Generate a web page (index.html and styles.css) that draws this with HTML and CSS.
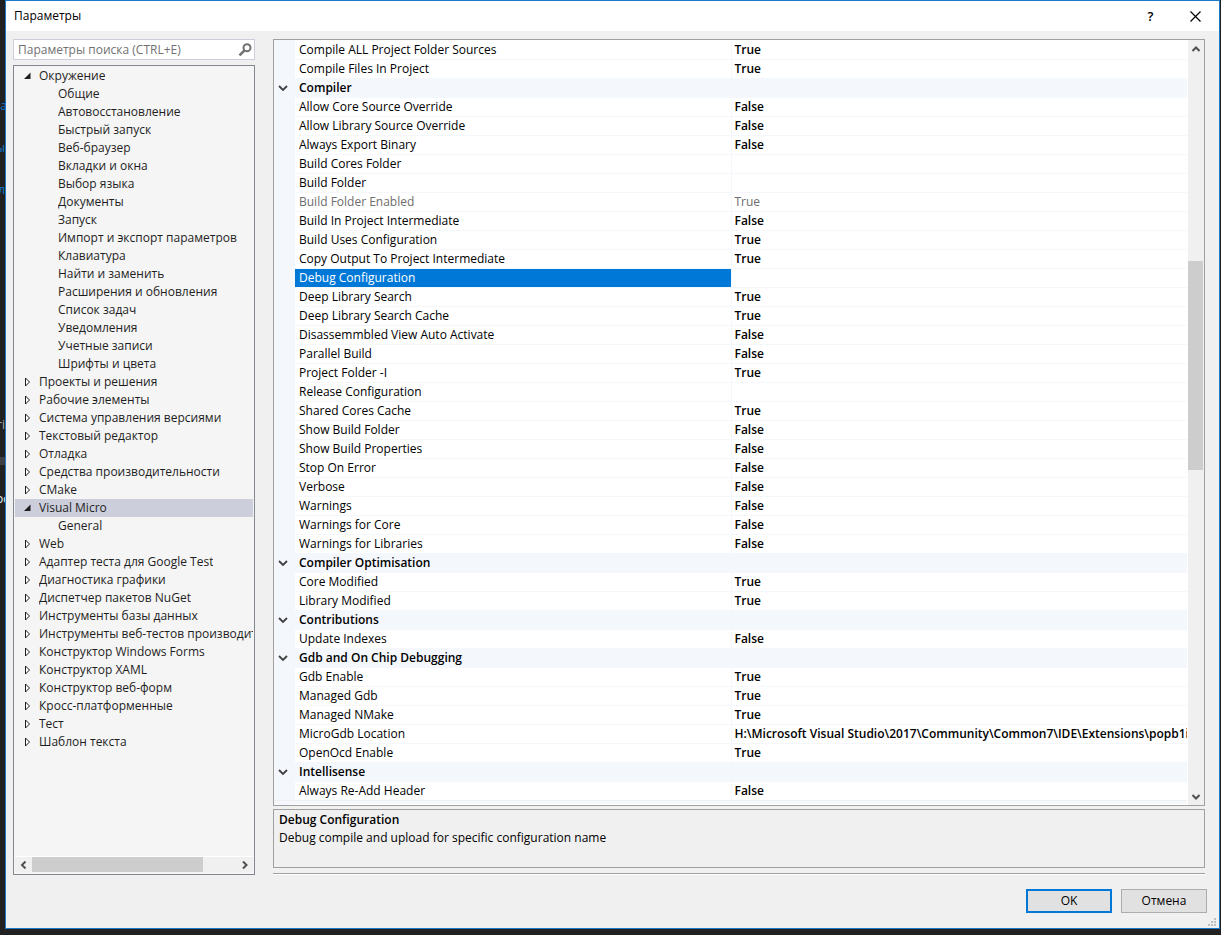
FILE: index.html
```html
<!DOCTYPE html>
<html lang="ru">
<head>
<meta charset="utf-8">
<title>Параметры</title>
<link rel="stylesheet" href="styles.css">
</head>
<body>
<div class="backdrop" aria-hidden="true">
  <span class="scrap scrap-a">на</span>
  <span class="scrap scrap-b">ы</span>
  <span class="scrap scrap-c">л</span>
  <span class="scrap scrap-d">ri</span>
  <span class="scrap-band"></span>
  <span class="scrap scrap-e">ос</span>
</div>
<main class="window">
  <header class="titlebar">
    <h1 class="title">Параметры</h1>
    <button class="caption-btn help" aria-label="Справка">?</button>
    <button class="caption-btn" aria-label="Закрыть"><svg width="11" height="11" viewBox="0 0 11 11"><path d="M.5.5l10 10M10.5.5l-10 10" stroke="#000" stroke-width="1.2" fill="none"/></svg></button>
  </header>
  <div class="content">
    <aside class="sidebar">
      <label class="search">
        <input type="text" placeholder="Параметры поиска (CTRL+E)" aria-label="Параметры поиска">
        <svg width="14" height="14" viewBox="0 0 14 14"><circle cx="9" cy="4.800" r="3.500" fill="none" stroke="#717171" stroke-width="2"/><path d="M6.500 7.300L1.500 12.300" stroke="#717171" stroke-width="2.600"/></svg>
      </label>
      <nav class="tree">
        <ul class="tree-list" id="tree"></ul>
        <div class="hscroll">
          <button class="arrow" aria-label="Влево"><svg width="8" height="8" viewBox="0 0 8 8"><path d="M5.500 .5L2 4l3.500 3.500" fill="none" stroke="#505050" stroke-width="2"/></svg></button>
          <div class="htrack"><div class="hthumb"></div></div>
          <button class="arrow" aria-label="Вправо"><svg width="8" height="8" viewBox="0 0 8 8"><path d="M2 .5L5.500 4 2 7.500" fill="none" stroke="#505050" stroke-width="2"/></svg></button>
        </div>
      </nav>
    </aside>
    <section class="panel">
      <div class="grid-box">
        <div class="grid-view">
          <table class="props">
            <colgroup><col class="c-gutter"><col class="c-name"><col class="c-value"></colgroup>
            <tbody id="props"></tbody>
          </table>
        </div>
        <div class="vscroll">
          <button class="arrow" aria-label="Вверх"><svg width="8" height="8" viewBox="0 0 8 8"><path d="M.5 6L4 2.500 7.500 6" fill="none" stroke="#505050" stroke-width="2"/></svg></button>
          <div class="vtrack"><div class="vthumb"></div></div>
          <button class="arrow" aria-label="Вниз"><svg width="8" height="8" viewBox="0 0 8 8"><path d="M.5 2L4 5.500 7.500 2" fill="none" stroke="#505050" stroke-width="2"/></svg></button>
        </div>
      </div>
      <div class="hint">
        <h2>Debug Configuration</h2>
        <p>Debug compile and upload for specific configuration name</p>
      </div>
      <hr class="rule">
    </section>
  </div>
  <footer class="footer">
    <button class="btn primary">OK</button>
    <button class="btn">Отмена</button>
  </footer>
  <svg class="grip" width="8" height="8" viewBox="0 0 8 8"><path d="M6 0h2v2H6zM3 3h2v2H3zM6 3h2v2H6zM0 6h2v2H0zM3 6h2v2H3zM6 6h2v2H6z" fill="#bfbfbf"/></svg>
</main>
<script src="app.js"></script>
</body>
</html>
```
FILE: styles.css
```css
* { box-sizing: border-box; }
body {
  margin: 0;
  min-height: 100vh;
  display: flex;
  padding: 0 1px 6px 5px;
  background: #212121;
  font: 12px/18px "Open Sans", "Noto Sans", sans-serif;
  color: #000;
}
button, input { font: inherit; color: inherit; }
h1, h2, p, ul { margin: 0; padding: 0; font-size: inherit; }
svg { display: block; flex: none; }

.backdrop { position: absolute; inset: 0 auto 0 0; width: 5px; overflow: hidden; }
.scrap { position: absolute; right: 0; color: #0e7ad3; }
.scrap-a { top: 97px; right: -2px; }
.scrap-b { top: 139px; }
.scrap-c { top: 181px; }
.scrap-d { top: 416px; color: #b0b0b0; }
.scrap-e { top: 490px; right: -4px; color: #f0f0f0; }
.scrap-band { position: absolute; top: 457px; width: 5px; height: 8px; background: #3f3f46; }

.window {
  position: relative;
  flex: 1;
  min-width: 0;
  display: flex;
  flex-direction: column;
  border: 1px solid #1979ca;
  background: #f0f0f0;
}
.titlebar { display: flex; align-items: center; height: 30px; padding: 0 1px 0 8px; background: #fff; }
.title { flex: 1; font-weight: 400; }
.caption-btn {
  width: 45px; height: 30px; padding: 0; border: 0; background: none;
  display: flex; align-items: center; justify-content: center;
}
.help { font-size: 13px; font-weight: 600; }

.content { flex: 1; display: grid; grid-template-columns: 242px minmax(0, 1fr); gap: 18px; padding: 8px 14px 0 7px; }
.sidebar { display: flex; flex-direction: column; gap: 5px; min-width: 0; }
.search {
  display: flex; align-items: center; height: 21px; padding: 0 2px 0 4px;
  border: 1px solid #cccedb; background: #fff;
}
.search input { flex: 1; min-width: 0; height: 19px; padding: 0; border: 0; outline: 0; background: none; }
.search input::placeholder { color: #717171; opacity: 1; }

.tree { flex: 1; display: flex; flex-direction: column; padding: 1px; border: 1px solid #828790; background: #f5f5f5; color: #1e1e1e; }
.tree-list { flex: 1; list-style: none; overflow: hidden; }
.tree-item { display: flex; align-items: center; gap: 8px; height: 18px; padding-left: 8px; white-space: nowrap; }
.tree-item span { min-width: 0; overflow: hidden; }
.tree-item.child { padding-left: 43px; }
.tree-item.selected { background: #cccedb; }
.hscroll { display: flex; height: 16px; margin-bottom: 1px; border-top: 1px solid #fff; background: #f0f0f0; }
.arrow { display: flex; align-items: center; justify-content: center; width: 17px; height: 17px; padding: 0; border: 0; background: none; }
.hscroll .arrow { height: 15px; }
.htrack { flex: 1; }
.hthumb { width: 84%; height: 15px; background: #cdcdcd; }

.panel { display: flex; flex-direction: column; min-width: 0; }
.grid-box { flex: 1; display: flex; border: 1px solid #a0a0a0; background: #fff; }
.grid-view { flex: 1; min-width: 0; padding-top: 1px; margin-right: 1px; background: linear-gradient(90deg, #f4f7fc 21px, #fff 21px); }
.props { width: 100%; table-layout: fixed; border-collapse: separate; border-spacing: 0; }
.c-gutter { width: 21px; }
.c-value { width: 50%; }
.props th, .props td {
  height: 19px; padding: 0 0 0 4px; text-align: left; font-weight: 400; line-height: 18px;
  white-space: nowrap; overflow: hidden; border-bottom: 1px solid #f4f7fc;
}
.props .gutter { padding: 0 0 0 4px; background: #f4f7fc; }
.props .value { padding-left: 3px; border-left: 1px solid #f4f7fc; font-weight: 600; }
.props .category th { background: #f4f7fc; font-weight: 600; }
.disabled th, .props .disabled .value { color: #6d6d6d; font-weight: 400; }
.props .current th { background: #0078d7; background-clip: padding-box; color: #fff; }
.next-strip { height: 4px; border-top: 1px solid #f0f0f0; margin-top: -1px; background: #f4f7fc; }
.vscroll { display: flex; flex-direction: column; width: 16px; background: #f0f0f0; }
.vscroll .arrow { width: 15px; }
.vtrack { flex: 1; display: grid; grid-template-rows: 204fr 209fr 318fr; }
.vthumb { grid-row: 2; width: 15px; background: #cdcdcd; }

.hint { height: 59px; margin-top: 3px; padding: 1px 5px; border: 1px solid #a0a0a0; }
.hint h2 { font-weight: 600; }
.rule { width: 100%; height: 2px; margin: 5px 0 0; border: 0; border-top: 1px solid #a0a0a0; background: #fff; }

.footer { display: flex; justify-content: flex-end; gap: 9px; padding: 14px 12px 15px; }
.btn { width: 86px; height: 24px; padding: 0; border: 1px solid #adadad; background: #e1e1e1; line-height: 20px; }
.btn.primary { border: 2px solid #0078d7; }
.grip { position: absolute; right: 3px; bottom: 2px; }
```
FILE: app.js
```js
const treeData = [
  ["open", "Окружение"],
  ["", "Общие"], ["", "Автовосстановление"], ["", "Быстрый запуск"], ["", "Веб-браузер"],
  ["", "Вкладки и окна"], ["", "Выбор языка"], ["", "Документы"], ["", "Запуск"],
  ["", "Импорт и экспорт параметров"], ["", "Клавиатура"], ["", "Найти и заменить"],
  ["", "Расширения и обновления"], ["", "Список задач"], ["", "Уведомления"],
  ["", "Учетные записи"], ["", "Шрифты и цвета"],
  ["closed", "Проекты и решения"], ["closed", "Рабочие элементы"],
  ["closed", "Система управления версиями"], ["closed", "Текстовый редактор"],
  ["closed", "Отладка"], ["closed", "Средства производительности"], ["closed", "CMake"],
  ["open", "Visual Micro", true], ["", "General"],
  ["closed", "Web"], ["closed", "Адаптер теста для Google Test"],
  ["closed", "Диагностика графики"], ["closed", "Диспетчер пакетов NuGet"],
  ["closed", "Инструменты базы данных"], ["closed", "Инструменты веб-тестов производител"],
  ["closed", "Конструктор Windows Forms"], ["closed", "Конструктор XAML"],
  ["closed", "Конструктор веб-форм"], ["closed", "Кросс-платформенные"],
  ["closed", "Тест"], ["closed", "Шаблон текста"]
];
const icons = {
  open: '<svg width="8" height="10" viewBox="0 0 8 10"><path d="M7.500 1.500v6.500H1z" fill="#1e1e1e"/></svg>',
  closed: '<svg width="8" height="10" viewBox="0 0 8 10"><path d="M2.500 1v8l4-4z" fill="#fff" stroke="#1e1e1e"/></svg>'
};
document.getElementById("tree").innerHTML = treeData.map(([state, text, selected]) =>
  `<li class="tree-item${state ? "" : " child"}${selected ? " selected" : ""}">${icons[state] || ""}<span>${text}</span></li>`
).join("");

const T = "True", F = "False";
const props = [
  ["Compile ALL Project Folder Sources", T], ["Compile Files In Project", T],
  ["Compiler"],
  ["Allow Core Source Override", F], ["Allow Library Source Override", F],
  ["Always Export Binary", F], ["Build Cores Folder", ""], ["Build Folder", ""],
  ["Build Folder Enabled", T, "disabled"], ["Build In Project Intermediate", F],
  ["Build Uses Configuration", T], ["Copy Output To Project Intermediate", T],
  ["Debug Configuration", "", "current"], ["Deep Library Search", T],
  ["Deep Library Search Cache", T], ["Disassemmbled View Auto Activate", F],
  ["Parallel Build", F], ["Project Folder -I", T], ["Release Configuration", ""],
  ["Shared Cores Cache", T], ["Show Build Folder", F], ["Show Build Properties", F],
  ["Stop On Error", F], ["Verbose", F], ["Warnings", F], ["Warnings for Core", F],
  ["Warnings for Libraries", F],
  ["Compiler Optimisation"],
  ["Core Modified", T], ["Library Modified", T],
  ["Contributions"],
  ["Update Indexes", F],
  ["Gdb and On Chip Debugging"],
  ["Gdb Enable", T], ["Managed Gdb", T], ["Managed NMake", T],
  ["MicroGdb Location", "H:\\Microsoft Visual Studio\\2017\\Community\\Common7\\IDE\\Extensions\\popb1ifx."],
  ["OpenOcd Enable", T],
  ["Intellisense"],
  ["Always Re-Add Header", F]
];
const chevron = '<svg width="10" height="7" viewBox="0 0 10 7"><path d="M1 1l4 4 4-4" fill="none" stroke="#404040" stroke-width="1.800"/></svg>';
document.getElementById("props").innerHTML = props.map(([name, value, kind]) =>
  value === undefined
    ? `<tr class="category"><td class="gutter">${chevron}</td><th colspan="2">${name}</th></tr>`
    : `<tr class="${kind || ""}"><td class="gutter"></td><th>${name}</th><td class="value">${value}</td></tr>`
).join("");
const strip = document.createElement("div");
strip.className = "next-strip";
document.querySelector(".grid-view").append(strip);
```
